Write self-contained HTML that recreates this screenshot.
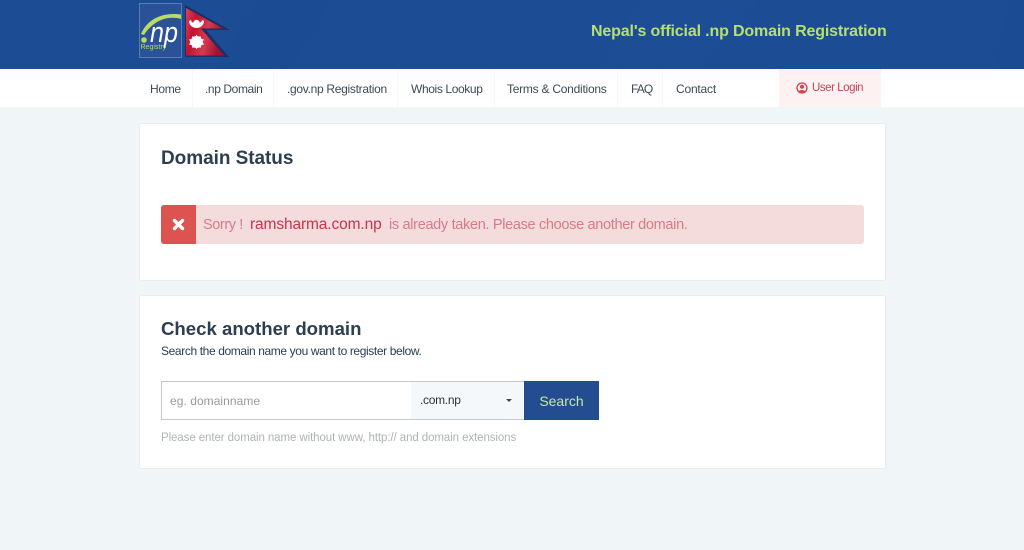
<!DOCTYPE html>
<html lang="en"><head><meta charset="utf-8"><title>Domain Status</title>
<style>
html,body{margin:0;padding:0}
body{width:1024px;height:550px;overflow:hidden;background:#f0f5f8;position:relative;font-family:"Liberation Sans",sans-serif;color:#2c3e50}
.a{position:absolute;white-space:nowrap}
#hdr{left:0;top:0;width:1024px;height:69px;background:#1c4c94}
#nav{left:0;top:69px;width:1024px;height:38px;background:#fff}
.n{top:69px;height:38px;line-height:40px;font-size:12px;color:#3d4a56}
.s{top:69px;width:1px;height:38px;background:#f6f7f8}
.card{background:#fff;border:1px solid #e9edf0;border-radius:3px;box-sizing:border-box;left:139px;width:747px}
h1,h2,p{margin:0;font-weight:normal}
</style></head><body>
<div class="a" id="hdr"></div>
<svg class="a" style="left:0;top:0" width="1024" height="69" viewBox="0 0 1024 69">
<path d="M260 0L330 0L290 69L215 69Z" fill="#1b4b92"/><path d="M1010 0L1024 0L1024 69L995 69Z" fill="#1b4b92"/><path d="M640 0L760 0L700 69L600 69Z" fill="#1d4d95"/>
</svg>
<svg class="a" style="left:139px;top:3px" width="92" height="56" viewBox="0 0 92 56">
<defs><linearGradient id="r" x1="0" y1="0" x2="1" y2="0.3"><stop offset="0" stop-color="#d8455c"/><stop offset=".3" stop-color="#c3122f"/><stop offset=".65" stop-color="#d63a50"/><stop offset="1" stop-color="#a5122c"/></linearGradient></defs>
<rect x=".5" y=".5" width="42" height="54" fill="#2a5298" stroke="#5a7ab5"/>
<path d="M2 31C8 17 22 9 42 11.500L42 16C28 12 14 18 5 32Z" fill="#b9dc62"/>
<text x="11" y="39" font-family="Liberation Sans,sans-serif" font-size="29" font-style="italic" fill="#fff" textLength="28" lengthAdjust="spacingAndGlyphs">np</text>
<circle cx="5" cy="37" r="2.800" fill="#b9dc62"/>
<text x="1.500" y="46" font-family="Liberation Sans,sans-serif" font-size="7" fill="#b9dc62">Registry</text>
<path d="M46 2L91 27H67L90 54H46Z" fill="#1d2f66"/>
<path d="M47 5L84 25.500H62L85 52.500H47Z" fill="url(#r)"/>
<path d="M50 18a7.500 7 0 0 0 15 0l-2-1a5.500 3.500 0 0 1-11 0Z" fill="#fff"/>
<circle cx="57.500" cy="20" r="3.200" fill="#fff"/>
<circle cx="57.500" cy="39" r="6" fill="#fff"/>
<path d="M57.500 31.500l1.400 2.900 2.700-1.400 .4 3 3 .4-1.400 2.600 1.400 2.600-3 .4-.4 3-2.700-1.400-1.400 2.900-1.400-2.900-2.700 1.400-.4-3-3-.4 1.400-2.600-1.400-2.600 3-.4.4-3 2.700 1.400Z" fill="#fff"/>
</svg>
<div class="a" style="left:591px;top:22px;font-size:16px;line-height:20px;font-weight:bold;color:#b5e070;letter-spacing:-.15px">Nepal's official .np Domain Registration</div>
<div class="a" id="nav"></div>
<div class="a n" style="left:150px;letter-spacing:-.3px">Home</div><div class="a s" style="left:192px"></div>
<div class="a n" style="left:205px;letter-spacing:-.4px">.np Domain</div><div class="a s" style="left:273px"></div>
<div class="a n" style="left:287px;letter-spacing:-.3px">.gov.np Registration</div><div class="a s" style="left:397px"></div>
<div class="a n" style="left:411px;letter-spacing:-.38px">Whois Lookup</div><div class="a s" style="left:494px"></div>
<div class="a n" style="left:507px;letter-spacing:-.25px">Terms &amp; Conditions</div><div class="a s" style="left:617px"></div>
<div class="a n" style="left:631px;letter-spacing:-.9px">FAQ</div><div class="a s" style="left:662px"></div>
<div class="a n" style="left:676px;letter-spacing:-.2px">Contact</div>
<div class="a" style="left:779px;top:69px;width:102px;height:38px;background:#fdf1f1"></div>
<svg class="a" style="left:796px;top:82px" width="12" height="12" viewBox="0 0 12 12"><circle cx="6" cy="6" r="5" fill="none" stroke="#d23f50" stroke-width="1.300"/><circle cx="6" cy="4.800" r="2" fill="#d23f50"/><path d="M2.500 9.500C3.500 7.500 8.500 7.500 9.500 9.500L6 11Z" fill="#d23f50"/></svg>
<div class="a n" style="left:812px;color:#c2455a;line-height:38px;font-size:11.500px;letter-spacing:-.45px">User Login</div>

<div class="a card" style="top:123px;height:158px"></div>
<h1 class="a" style="left:161px;top:147px;font-size:19px;line-height:24px;font-weight:bold;color:#2c3e50;letter-spacing:-.05px">Domain Status</h1>
<div class="a" style="left:161px;top:205px;width:703px;height:39px;background:#f4dcdd;border-radius:3px"></div>
<div class="a" style="left:161px;top:205px;width:35px;height:39px;background:#dc5350;border-radius:3px 0 0 3px"></div>
<svg class="a" style="left:172px;top:218px" width="13" height="13" viewBox="0 0 13 13"><path d="M2.500 2.500L10.500 10.500M10.500 2.500L2.500 10.500" stroke="#fff" stroke-width="3.400" stroke-linecap="round"/></svg>
<p class="a" style="left:203px;top:215px;font-size:14.500px;line-height:20px;color:#d67c89;letter-spacing:-.4px">Sorry !</p>
<p class="a" style="left:250px;top:215px;font-size:15.500px;line-height:20px;color:#c8354a;letter-spacing:-.12px">ramsharma.com.np</p>
<p class="a" style="left:389px;top:215px;font-size:14.500px;line-height:20px;color:#d67c89;letter-spacing:-.32px">is already taken. Please choose another domain.</p>

<div class="a card" style="top:295px;height:174px"></div>
<h2 class="a" style="left:161px;top:317px;font-size:18.600px;line-height:24px;font-weight:bold;color:#2c3e50">Check another domain</h2>
<p class="a" style="left:161px;top:344px;font-size:12px;line-height:15px;color:#2c3e50;letter-spacing:-.38px">Search the domain name you want to register below.</p>
<div class="a" style="left:161px;top:381px;width:363px;height:39px;box-sizing:border-box;border:1px solid #c5c9cc;background:#fff"></div>
<div class="a" style="left:170px;top:393px;font-size:12px;line-height:16px;color:#9a9a9a;letter-spacing:.05px">eg. domainname</div>
<div class="a" style="left:411px;top:382px;width:113px;height:37px;background:#f5f8fa"></div>
<div class="a" style="left:420px;top:392px;font-size:12px;line-height:16px;color:#333;letter-spacing:-.3px">.com.np</div>
<div class="a" style="left:506px;top:399px;width:0;height:0;border:3px solid transparent;border-top:3px solid #444;border-bottom:0"></div>
<div class="a" style="left:524px;top:381px;width:75px;height:39px;background:#244c90;color:#c5e8a5;font-size:14px;line-height:40px;text-align:center">Search</div>
<p class="a" style="left:161px;top:431px;font-size:11.500px;line-height:15px;color:#b0b3b5;letter-spacing:-.09px">Please enter domain name without www, http:// and domain extensions</p>
</body></html>
